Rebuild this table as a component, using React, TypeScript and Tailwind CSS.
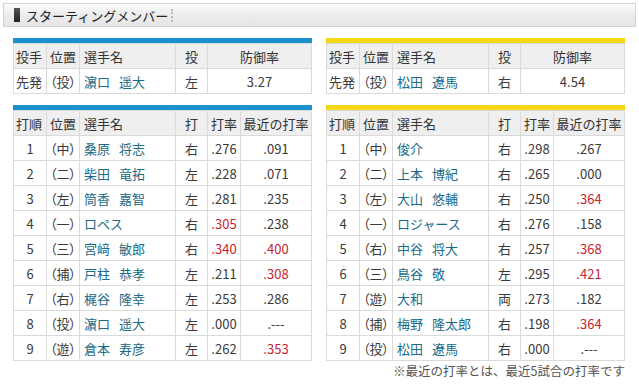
const FONT = "font-['Noto_Sans_CJK_JP','Noto_Sans',sans-serif]";

type Batter = { no: number; pos: string; name: string; hand: string; avg: string; avgHot?: boolean; recent: string; recentHot?: boolean };
type Team = { accent: string; pitcher: { name: string; hand: string; era: string }; batters: Batter[] };

const baystars: Team = {
  accent: "bg-[#1c8fcd]",
  pitcher: { name: "濵口 遥大", hand: "左", era: "3.27" },
  batters: [
    { no: 1, pos: "中", name: "桑原 将志", hand: "右", avg: ".276", recent: ".091" },
    { no: 2, pos: "二", name: "柴田 竜拓", hand: "左", avg: ".228", recent: ".071" },
    { no: 3, pos: "左", name: "筒香 嘉智", hand: "左", avg: ".281", recent: ".235" },
    { no: 4, pos: "一", name: "ロペス", hand: "右", avg: ".305", avgHot: true, recent: ".238" },
    { no: 5, pos: "三", name: "宮﨑 敏郎", hand: "右", avg: ".340", avgHot: true, recent: ".400", recentHot: true },
    { no: 6, pos: "捕", name: "戸柱 恭孝", hand: "左", avg: ".211", recent: ".308", recentHot: true },
    { no: 7, pos: "右", name: "梶谷 隆幸", hand: "左", avg: ".253", recent: ".286" },
    { no: 8, pos: "投", name: "濵口 遥大", hand: "左", avg: ".000", recent: ".---" },
    { no: 9, pos: "遊", name: "倉本 寿彦", hand: "左", avg: ".262", recent: ".353", recentHot: true },
  ],
};

const tigers: Team = {
  accent: "bg-[#f6d716]",
  pitcher: { name: "松田 遼馬", hand: "右", era: "4.54" },
  batters: [
    { no: 1, pos: "中", name: "俊介", hand: "右", avg: ".298", recent: ".267" },
    { no: 2, pos: "二", name: "上本 博紀", hand: "右", avg: ".265", recent: ".000" },
    { no: 3, pos: "左", name: "大山 悠輔", hand: "右", avg: ".250", recent: ".364", recentHot: true },
    { no: 4, pos: "一", name: "ロジャース", hand: "右", avg: ".276", recent: ".158" },
    { no: 5, pos: "右", name: "中谷 将大", hand: "右", avg: ".257", recent: ".368", recentHot: true },
    { no: 6, pos: "三", name: "鳥谷 敬", hand: "左", avg: ".295", recent: ".421", recentHot: true },
    { no: 7, pos: "遊", name: "大和", hand: "両", avg: ".273", recent: ".182" },
    { no: 8, pos: "捕", name: "梅野 隆太郎", hand: "右", avg: ".198", recent: ".364", recentHot: true },
    { no: 9, pos: "投", name: "松田 遼馬", hand: "右", avg: ".000", recent: ".---" },
  ],
};

const th = "h-[25px] border border-[#dadada] bg-[#efefef] font-normal text-[#333] p-0 whitespace-nowrap";
const td = "h-[25px] border border-[#dadada] bg-white p-0 text-[#3a3a3a] whitespace-nowrap";
// position cell: proportional full-width parens so "（中）" fits the narrow column
const posCell = `${td} pl-[3px] [font-feature-settings:'palt'] overflow-hidden`;

const Name = ({ name }: { name: string }) => {
  const [family, given] = name.split(" ");
  return (
    <span className="text-[#1b6a87]">
      {family}
      {given && <span className="ml-[9px]">{given}</span>}
    </span>
  );
};

const PitcherTable = ({ team }: { team: Team }) => (
  <div>
    <div className={`h-[5px] ${team.accent}`} />
    <table className="w-full table-fixed border-collapse text-[13px] leading-none">
      <colgroup>
        <col className="w-[33px]" />
        <col className="w-[33px]" />
        <col className="w-[96px]" />
        <col className="w-[32px]" />
        <col />
      </colgroup>
      <thead>
        <tr>
          <th className={`${th} pl-[2px] text-left`}>投手</th>
          <th className={`${th} pl-[3px] text-left`}>位置</th>
          <th className={`${th} pl-[4px] text-left`}>選手名</th>
          <th className={`${th} text-center`}>投</th>
          <th className={`${th} text-center`}>防御率</th>
        </tr>
      </thead>
      <tbody>
        <tr>
          <td className={`${td} pl-[2px]`}>先発</td>
          <td className={posCell}>（投）</td>
          <td className={`${td} pl-[4px]`}>
            <Name name={team.pitcher.name} />
          </td>
          <td className={`${td} text-center`}>{team.pitcher.hand}</td>
          <td className={`${td} text-center`}>{team.pitcher.era}</td>
        </tr>
      </tbody>
    </table>
  </div>
);

const BattingTable = ({ team }: { team: Team }) => (
  <div>
    <div className={`h-[5px] ${team.accent}`} />
    <table className="w-full table-fixed border-collapse text-[13px] leading-none">
      <colgroup>
        <col className="w-[33px]" />
        <col className="w-[33px]" />
        <col className="w-[96px]" />
        <col className="w-[32px]" />
        <col className="w-[33px]" />
        <col />
      </colgroup>
      <thead>
        <tr>
          <th className={`${th} pl-[2px] text-left`}>打順</th>
          <th className={`${th} pl-[3px] text-left`}>位置</th>
          <th className={`${th} pl-[4px] text-left`}>選手名</th>
          <th className={`${th} text-center`}>打</th>
          <th className={`${th} text-center`}>打率</th>
          <th className={`${th} text-center`}>最近の打率</th>
        </tr>
      </thead>
      <tbody>
        {team.batters.map(b => (
          <tr key={b.no}>
            <td className={`${td} text-center`}>{b.no}</td>
            <td className={posCell}>（{b.pos}）</td>
            <td className={`${td} pl-[4px]`}>
              <Name name={b.name} />
            </td>
            <td className={`${td} text-center`}>{b.hand}</td>
            <td className={`${td} text-center ${b.avgHot ? "text-[#c8242f]" : ""}`}>{b.avg}</td>
            <td className={`${td} text-center ${b.recentHot ? "text-[#c8242f]" : ""}`}>{b.recent}</td>
          </tr>
        ))}
      </tbody>
    </table>
  </div>
);

export default function App() {
  return (
    <div className={`${FONT} w-[639px] h-[384px] bg-white pt-[3px]`}>
      {/* Section header */}
      <div className="mx-[3px] flex h-[24px] items-center border border-[#d4d4d4] bg-gradient-to-b from-[#fcfcfc] via-[#ececec] to-[#e6e6e6] pl-[10px]">
        <div className="h-[14px] w-[6px] bg-gradient-to-b from-[#555] to-[#222]" />
        <span className="ml-[6px] text-[13px] leading-none text-[#222]">スターティングメンバー</span>
        <span className="ml-[3px] h-[13px] border-l-2 border-dotted border-[#b8b8b8]" />
      </div>

      <div className="mt-[11px] grid grid-cols-[299px_299px] gap-x-[14px] px-[13px]">
        <PitcherTable team={baystars} />
        <PitcherTable team={tigers} />
      </div>

      <div className="mt-[11px] grid grid-cols-[299px_299px] gap-x-[14px] px-[13px]">
        <BattingTable team={baystars} />
        <BattingTable team={tigers} />
      </div>

      <p className="mt-[4px] pr-[14px] text-right text-[12.5px] leading-none text-[#555]">
        ※最近の打率とは、最近5試合の打率です
      </p>
    </div>
  );
}
